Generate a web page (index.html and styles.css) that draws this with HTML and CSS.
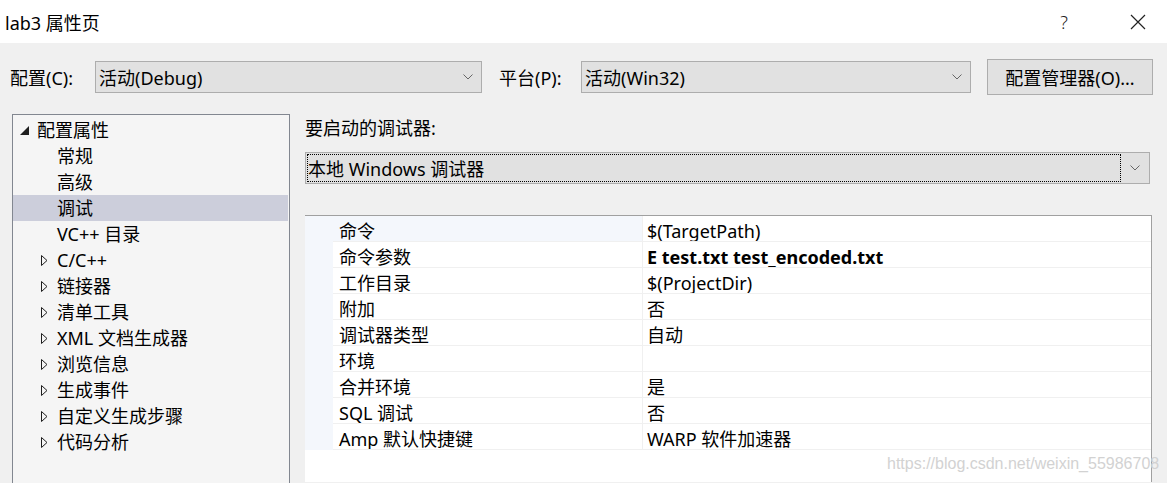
FILE: index.html
```html
<!DOCTYPE html>
<html lang="zh-CN">
<head>
    <meta charset="UTF-8">
    <title>lab3 属性页</title>
    <link rel="stylesheet" href="styles.css">
</head>
<body>
    <div class="titlebar">
        <span class="title">lab3 属性页</span>
        <span class="help">?</span>
        <svg class="close" width="16" height="16" viewBox="0 0 16 16">
            <path d="M1 1 L15 15 M15 1 L1 15" stroke="#222" stroke-width="1.2" fill="none"/>
        </svg>
    </div>

    <div class="config-row">
        <label class="cfg-label">配置(C):</label>
        <div class="combo combo-config">
            <span class="combo-text">活动(Debug)</span>
            <svg class="chev" width="10" height="6" viewBox="0 0 10 6"><path d="M0.5 0.5 L5 5 L9.5 0.5" stroke="#666" fill="none"/></svg>
        </div>
        <label class="cfg-label plat-label">平台(P):</label>
        <div class="combo combo-platform">
            <span class="combo-text">活动(Win32)</span>
            <svg class="chev" width="10" height="6" viewBox="0 0 10 6"><path d="M0.5 0.5 L5 5 L9.5 0.5" stroke="#666" fill="none"/></svg>
        </div>
        <button class="btn">配置管理器(O)...</button>
    </div>

    <div class="main">
        <div class="tree">
            <div class="node root">
                <svg class="tri-open" width="10" height="9" viewBox="0 0 10 9"><polygon points="9,0 9,9 0,9" fill="#1e1e1e"/></svg>
                <span>配置属性</span>
            </div>
            <div class="node leaf">常规</div>
            <div class="node leaf">高级</div>
            <div class="node leaf selected">调试</div>
            <div class="node leaf">VC++ 目录</div>
            <div class="node branch"><svg class="tri" width="7" height="11" viewBox="0 0 7 11"><polygon points="0.5,0.5 6,5.5 0.5,10.5" fill="none" stroke="#1e1e1e"/></svg><span>C/C++</span></div>
            <div class="node branch"><svg class="tri" width="7" height="11" viewBox="0 0 7 11"><polygon points="0.5,0.5 6,5.5 0.5,10.5" fill="none" stroke="#1e1e1e"/></svg><span>链接器</span></div>
            <div class="node branch"><svg class="tri" width="7" height="11" viewBox="0 0 7 11"><polygon points="0.5,0.5 6,5.5 0.5,10.5" fill="none" stroke="#1e1e1e"/></svg><span>清单工具</span></div>
            <div class="node branch"><svg class="tri" width="7" height="11" viewBox="0 0 7 11"><polygon points="0.5,0.5 6,5.5 0.5,10.5" fill="none" stroke="#1e1e1e"/></svg><span>XML 文档生成器</span></div>
            <div class="node branch"><svg class="tri" width="7" height="11" viewBox="0 0 7 11"><polygon points="0.5,0.5 6,5.5 0.5,10.5" fill="none" stroke="#1e1e1e"/></svg><span>浏览信息</span></div>
            <div class="node branch"><svg class="tri" width="7" height="11" viewBox="0 0 7 11"><polygon points="0.5,0.5 6,5.5 0.5,10.5" fill="none" stroke="#1e1e1e"/></svg><span>生成事件</span></div>
            <div class="node branch"><svg class="tri" width="7" height="11" viewBox="0 0 7 11"><polygon points="0.5,0.5 6,5.5 0.5,10.5" fill="none" stroke="#1e1e1e"/></svg><span>自定义生成步骤</span></div>
            <div class="node branch"><svg class="tri" width="7" height="11" viewBox="0 0 7 11"><polygon points="0.5,0.5 6,5.5 0.5,10.5" fill="none" stroke="#1e1e1e"/></svg><span>代码分析</span></div>
        </div>

        <div class="panel">
            <div class="panel-label">要启动的调试器:</div>
            <div class="combo combo-debugger">
                <div class="focus-box">本地 Windows 调试器</div>
                <svg class="chev" width="10" height="6" viewBox="0 0 10 6"><path d="M0.5 0.5 L5 5 L9.5 0.5" stroke="#666" fill="none"/></svg>
            </div>

            <div class="grid">
                <div class="row active"><div class="margin"></div><div class="name">命令</div><div class="value">$(TargetPath)</div></div>
                <div class="row"><div class="margin"></div><div class="name">命令参数</div><div class="value bold">E test.txt test_encoded.txt</div></div>
                <div class="row"><div class="margin"></div><div class="name">工作目录</div><div class="value">$(ProjectDir)</div></div>
                <div class="row"><div class="margin"></div><div class="name">附加</div><div class="value">否</div></div>
                <div class="row"><div class="margin"></div><div class="name">调试器类型</div><div class="value">自动</div></div>
                <div class="row"><div class="margin"></div><div class="name">环境</div><div class="value"></div></div>
                <div class="row"><div class="margin"></div><div class="name">合并环境</div><div class="value">是</div></div>
                <div class="row"><div class="margin"></div><div class="name">SQL 调试</div><div class="value">否</div></div>
                <div class="row"><div class="margin"></div><div class="name">Amp 默认快捷键</div><div class="value">WARP 软件加速器</div></div>
            </div>
        </div>
    </div>

    <div class="watermark">https://blog.csdn.net/weixin_55986708</div>
</body>
</html>
```

FILE: styles.css
```css
/* dialog base */
body {
    margin: 0;
    background: #f0f0f0;
    font-family: "Noto Sans", "Noto Sans CJK SC", sans-serif;
    font-size: 18px;
    color: #000;
    overflow: hidden;
    height: 483px;
    position: relative;
}

.titlebar {
    height: 43px;
    background: #fff;
    display: flex;
    align-items: center;
    padding-left: 5px;
}
.title {
    flex: 1;
}
.help {
    font-weight: 300;
    color: #222;
    margin-right: 62px;
}
.close {
    margin-right: 21px;
}

/* config row */
.config-row {
    display: flex;
    align-items: center;
    padding-top: 16px;
    height: 36px;
}
.cfg-label {
    margin-left: 10px;
    width: 85px;
}
.plat-label {
    margin-left: 17px;
    width: 82px;
}
.combo {
    display: flex;
    align-items: center;
    box-sizing: border-box;
    height: 32px;
    background: #e1e1e1;
    border: 1px solid #adadad;
    padding-left: 3px;
}
.combo-text {
    flex: 1;
}
.chev {
    margin-right: 8px;
}
.combo-config {
    width: 387px;
}
.combo-platform {
    width: 390px;
}
.btn {
    margin-left: 16px;
    width: 166px;
    height: 36px;
    background: #e1e1e1;
    border: 1px solid #adadad;
    font-family: inherit;
    font-size: 18px;
    color: #000;
    padding: 0;
}

/* main area */
.main {
    display: flex;
    margin-top: 19px;
}
.tree {
    margin-left: 12px;
    width: 278px;
    height: 369px;
    box-sizing: border-box;
    background: #f5f5f5;
    border: 1px solid #828790;
    border-bottom: none;
    padding: 2px 1px 0 0;
}
.node {
    height: 26px;
    line-height: 26px;
    display: flex;
    align-items: center;
    white-space: nowrap;
}
.root {
    padding-left: 7px;
}
.tri-open {
    margin-right: 7px;
    margin-top: 1px;
}
.leaf {
    padding-left: 44px;
}
.branch {
    padding-left: 28px;
}
.tri {
    margin-right: 9px;
    margin-top: 1px;
}
.selected {
    background: #cccedb;
}

.panel {
    margin-left: 15px;
    width: 847px;
    display: flex;
    flex-direction: column;
}
.panel-label {
    height: 26px;
    line-height: 26px;
    margin-top: 1px;
}
.combo-debugger {
    margin-top: 11px;
    width: 845px;
    padding: 1px;
}
.focus-box {
    flex: 1;
    height: 100%;
    box-sizing: border-box;
    border: 1px dotted #000;
    line-height: 28px;
    margin-right: 9px;
}

/* property grid */
.grid {
    margin-top: 31px;
    width: 847px;
    height: 267px;
    background: #fff;
    border-top: 1px solid #a0a0a0;
    border-right: 1px solid #a0a0a0;
    box-sizing: border-box;
}
.row {
    display: flex;
    height: 26px;
    line-height: 30px;
}
.margin {
    width: 28px;
    background: #f4f7fc;
}
.name {
    width: 303px;
    padding-left: 6px;
    border-bottom: 1px solid #f0f0f0;
    border-right: 1px solid #f0f0f0;
    white-space: nowrap;
    overflow: hidden;
    box-sizing: content-box;
    height: 25px;
}
.value {
    flex: 1;
    padding-left: 4px;
    border-bottom: 1px solid #f0f0f0;
    white-space: nowrap;
    overflow: hidden;
    height: 25px;
}
.active .name {
    background: #f4f7fc;
}
.bold {
    font-weight: bold;
}

.watermark {
    position: absolute;
    left: 887px;
    top: 455px;
    font-family: "Liberation Sans", sans-serif;
    font-size: 16px;
    color: #d2d2d2;
}
```
